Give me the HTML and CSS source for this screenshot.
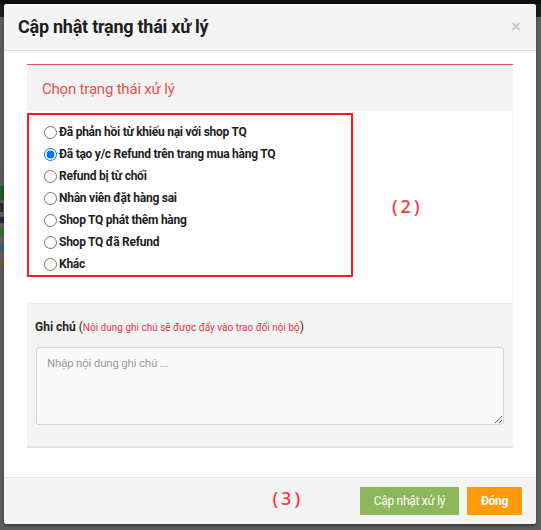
FILE: index.html
```html
<!DOCTYPE html>
<html lang="vi">
<head>
<meta charset="utf-8">
<link rel="stylesheet" href="styles.css">
</head>
<body>
<div class="page">
  <div class="topbar"></div>
  <div class="bg-bits">
    <span class="bit bit-green"></span>
    <span class="bit bit-num"></span>
    <span class="bit bit-icon"></span>
    <span class="bit bit-gtext"></span>
    <span class="bit bit-btext"></span>
    <span class="bit bit-otext"></span>
  </div>
</div>

<div class="modal">
  <div class="modal-header">
    <h4 class="modal-title">Cập nhật trạng thái xử lý</h4>
    <span class="close">×</span>
  </div>
  <div class="modal-body">
    <div class="panel">
      <div class="panel-heading">Chọn trạng thái xử lý</div>
      <div class="panel-body">
        <div class="choices">
          <label class="choice"><input type="radio" name="st"><span>Đã phản hồi từ khiếu nại với shop TQ</span></label>
          <label class="choice"><input type="radio" name="st" checked><span>Đã tạo y/c Refund trên trang mua hàng TQ</span></label>
          <label class="choice"><input type="radio" name="st"><span>Refund bị từ chối</span></label>
          <label class="choice"><input type="radio" name="st"><span>Nhân viên đặt hàng sai</span></label>
          <label class="choice"><input type="radio" name="st"><span>Shop TQ phát thêm hàng</span></label>
          <label class="choice"><input type="radio" name="st"><span>Shop TQ đã Refund</span></label>
          <label class="choice"><input type="radio" name="st"><span>Khác</span></label>
        </div>
        <div class="mark mark-2">(2)</div>
      </div>
      <div class="note">
        <div class="note-label"><b>Ghi chú</b> (<span class="note-hint">Nội dung ghi chú sẽ được đẩy vào trao đổi nội bộ</span>)</div>
        <textarea class="note-input" placeholder="Nhập nội dung ghi chú ..."></textarea>
      </div>
    </div>
  </div>
  <div class="modal-footer">
    <span class="mark mark-3">(3)</span>
    <button class="btn btn-green">Cập nhật xử lý</button>
    <button class="btn btn-orange">Đóng</button>
  </div>
</div>
</body>
</html>
```

FILE: styles.css
```css
* { box-sizing: border-box; }
html, body { margin: 0; padding: 0; }
body {
  width: 541px;
  height: 530px;
  overflow: hidden;
  background: #5d5d5d;
  font-family: Roboto, "Liberation Sans", Arial, sans-serif;
  position: relative;
}
.page { width: 100%; height: 100%; }
.topbar { height: 17px; background: #1c1c1c; border-top: 4px solid #0e0e0e; }
.bg-bits {
  display: flex;
  flex-direction: column;
  align-items: flex-start;
  padding-top: 169px;
  gap: 3px;
}
.bit { display: block; width: 4px; }
.bit-green { height: 14px; background: #1e5a2c; }
.bit-num { height: 9px; width: 3px; background: #2a2a2a; }
.bit-icon { height: 6px; background: #1d2a40; margin-top: 2px; }
.bit-gtext { height: 6px; background: #3b6a35; margin-top: 3px; }
.bit-btext { height: 6px; background: #3d5a80; margin-top: 6px; }
.bit-otext { height: 6px; background: #7a5a2a; margin-top: 6px; }

.modal {
  position: absolute;
  left: 4px;
  top: 4px;
  width: 532px;
  height: 520px;
  background: #fff;
  border-radius: 3px;
  box-shadow: 0 2px 3px rgba(0,0,0,0.35);
  display: flex;
  flex-direction: column;
  overflow: hidden;
}
.modal-header {
  height: 47px;
  background: #f4f4f4;
  border-bottom: 1px solid #dcdcdc;
  display: flex;
  align-items: center;
  justify-content: space-between;
  padding: 0 15px 2px 14px;
  flex: none;
}
.modal-title {
  margin: 0;
  font-size: 18px;
  letter-spacing: -0.25px;
  font-weight: bold;
  color: #1e1e1e;
}
.close {
  font-family: "Liberation Sans", Arial, sans-serif;
  font-size: 17px;
  font-weight: bold;
  color: #c8c8c8;
  line-height: 1;
}
.modal-body {
  flex: none;
  height: 426px;
  padding: 13px 23px 0 23px;
}
.panel {
  border-top: 1px solid #ea5050;
}
.panel-heading {
  height: 46px;
  background: #f4f4f4;
  color: #e9504e;
  font-size: 15px;
  letter-spacing: -0.2px;
  padding: 15px 0 0 15px;
}
.panel-body {
  height: 192px;
  padding-top: 2px;
  display: flex;
  align-items: flex-start;
  border-right: 1px solid #efefef;
}
.choices {
  width: 326px;
  height: 164px;
  border: 2px solid #ff1a1a;
  padding-top: 6px;
  display: flex;
  flex-direction: column;
}
.choice {
  height: 22px;
  display: flex;
  align-items: center;
  font-size: 12px;
  letter-spacing: -0.25px;
  font-weight: bold;
  color: #1e1e1e;
}
.choice input {
  width: 13px;
  height: 13px;
  margin: 0 2px 0 15px;
}
.mark {
  font-family: "Noto Sans", sans-serif;
  font-size: 18px;
  font-weight: 500;
  color: #ff3434;
  letter-spacing: 3px;
  line-height: 1;
}
.mark-2 {
  align-self: center;
  margin: 0 0 4px 39px;
}
.note {
  height: 145px;
  background: #f4f4f4;
  border-top: 1px solid #ececec;
  border-bottom: 2px solid #e3e3e3;
  padding: 16px 9px 0 8px;
}
.note-label {
  font-size: 12px;
  color: #222;
  height: 14px;
  line-height: 14px;
}
.note-label b { font-weight: bold; }
.note-hint {
  font-size: 10px;
  color: #e8334a;
}
.note-input {
  display: block;
  margin: 13px 0 0 1px;
  width: 468px;
  height: 78px;
  background: #f9f9f9;
  border: 1px solid #d6d6d6;
  border-radius: 3px;
  padding: 8px 10px;
  font-family: Roboto, "Liberation Sans", Arial, sans-serif;
  font-size: 11.5px;
  letter-spacing: -0.2px;
  resize: vertical;
}
.note-input::placeholder { color: #9a9a9a; }
.modal-footer {
  flex: 1;
  background: #f4f4f4;
  border-top: 1px solid #e4e4e4;
  display: flex;
  justify-content: flex-end;
  align-items: flex-start;
  padding: 9px 14px 0 0;
}
.mark-3 {
  margin: 2px 49px 0 0;
}
.btn {
  height: 28px;
  border: none;
  color: #fff;
  font-family: Roboto, "Liberation Sans", Arial, sans-serif;
  font-size: 12px;
  letter-spacing: -0.3px;
  padding: 0;
  margin-left: 8px;
  white-space: nowrap;
}
.btn-green { background: #8eb75b; width: 99px; }
.btn-orange { background: #ff9a0c; width: 55px; font-weight: bold; }
```
